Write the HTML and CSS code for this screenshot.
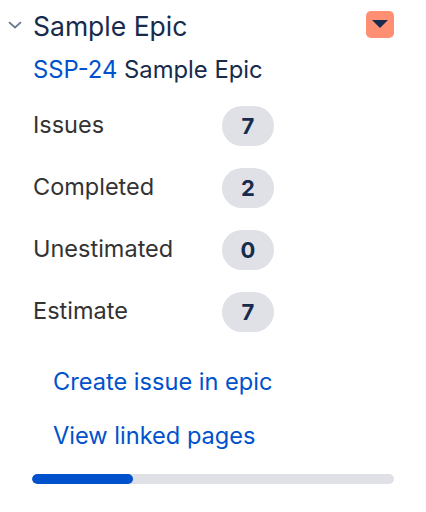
FILE: index.html
```html
<!DOCTYPE html>
<html>
<head>
<meta charset="utf-8">
<link rel="stylesheet" href="styles.css">
</head>
<body>
<div class="epic">
  <div class="header">
    <svg class="chev" width="14" height="8" viewBox="0 0 14 8"><path d="M1 1.2 L7 6.5 L13 1.2" fill="none" stroke="#6B778C" stroke-width="1.8"/></svg>
    <div class="title">Sample Epic</div>
    <div class="menu-btn"><svg width="16" height="8" viewBox="0 0 16 8"><path d="M0 0 H16 L8 8 Z" fill="#172B4D"/></svg></div>
  </div>
  <div class="key-line"><a class="key">SSP-24</a> Sample Epic</div>
  <div class="stats">
    <div class="label">Issues</div><div class="badge">7</div>
    <div class="label">Completed</div><div class="badge">2</div>
    <div class="label">Unestimated</div><div class="badge">0</div>
    <div class="label">Estimate</div><div class="badge">7</div>
  </div>
  <div class="links">
    <a class="link">Create issue in epic</a>
    <a class="link">View linked pages</a>
  </div>
  <div class="progress"><div class="fill" style="width:28%"></div></div>
</div>
</body>
</html>
```
FILE: styles.css
```css
body { margin: 0; background: #fff; font-family: Inter, "Noto Sans", sans-serif; }
.epic { padding: 10px 32px 0 8px; width: 386px; }
.header { display: flex; align-items: center; height: 28px; }
.chev { width: 14px; height: 8px; margin-right: 11px; margin-top: 2px; }
.title { font-size: 26.5px; line-height: 28px; padding-top: 3px; color: #172B4D; flex: 1; }
.menu-btn { width: 28px; height: 27px; background: #FF8F73; border-radius: 5px; display: flex; align-items: center; justify-content: center; }
.menu-btn svg { display: block; }
.key-line { margin: 18px 0 0 25px; font-size: 23.8px; line-height: 28px; color: #172B4D; }
.key { color: #0052CC; }
.stats { display: grid; grid-template-columns: 189px 52px; grid-auto-rows: 62px; margin: 10px 0 0 25px; align-items: center; }
.label { font-size: 23.5px; line-height: 28px; color: #333; }
.badge { height: 40px; margin-top: 2px; border-radius: 20px; background: #DFE1E6; color: #172B4D; font-weight: 700; font-size: 22px; display: flex; align-items: center; justify-content: center; }
.links { display: flex; flex-direction: column; margin: 26px 0 0 45px; gap: 26px; }
.link { font-size: 23.6px; line-height: 28px; color: #0052CC; }
.progress { margin: 24px 0 0 24px; height: 10px; background: #DFE1E6; border-radius: 5px; overflow: hidden; }
.fill { height: 100%; background: #0052CC; border-radius: 5px; }
```
